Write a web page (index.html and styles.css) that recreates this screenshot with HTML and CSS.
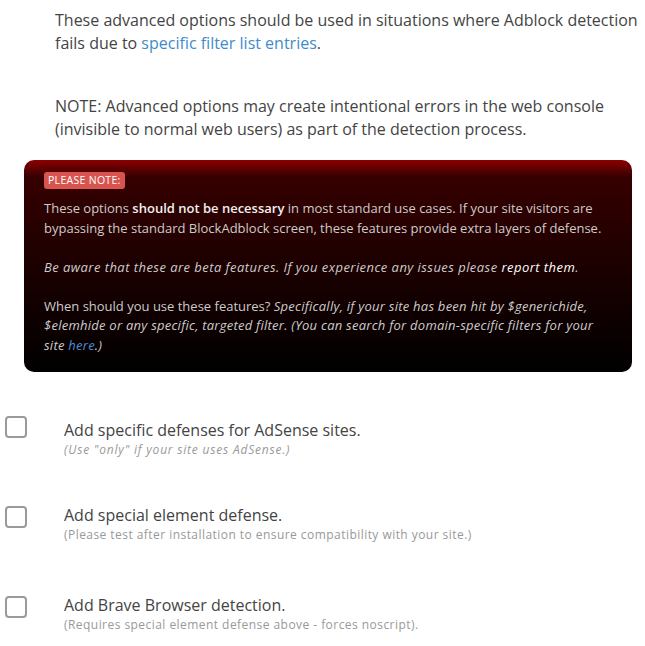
FILE: index.html
```html
<!DOCTYPE html>
<html>
<head>
<meta charset="utf-8">
<link rel="stylesheet" href="styles.css">
</head>
<body>
<div class="page">
  <div class="intro">
    <p class="lead">These advanced options should be used in situations where Adblock detection fails due to <a class="link" href="#">specific filter list entries</a>.</p>
    <p class="lead note">NOTE: Advanced options may create intentional errors in the web console (invisible to normal web users) as part of the detection process.</p>
  </div>
  <div class="warn">
    <span class="badge">PLEASE NOTE:</span>
    <p class="wtext first">These options <b>should not be necessary</b> in most standard use cases. If your site visitors are bypassing the standard BlockAdblock screen, these features provide extra layers of defense.</p>
    <p class="wtext"><i>Be aware that these are beta features. If you experience any issues please <a class="wlink-w" href="#">report them</a>.</i></p>
    <p class="wtext when">When should you use these features? <i>Specifically, if your site has been hit by $generichide, $elemhide or any specific, targeted filter. (You can search for domain-specific filters for your site <a class="wlink" href="#">here</a>.)</i></p>
  </div>
  <div class="options">
    <div class="opt">
      <span class="box"></span>
      <div class="otext top">
        <div class="olabel">Add specific defenses for AdSense sites.</div>
        <div class="osub"><i>(Use "only" if your site uses AdSense.)</i></div>
      </div>
    </div>
    <div class="opt">
      <span class="box"></span>
      <div class="otext">
        <div class="olabel">Add special element defense.</div>
        <div class="osub">(Please test after installation to ensure compatibility with your site.)</div>
      </div>
    </div>
    <div class="opt last">
      <span class="box"></span>
      <div class="otext">
        <div class="olabel">Add Brave Browser detection.</div>
        <div class="osub">(Requires special element defense above - forces noscript).</div>
      </div>
    </div>
  </div>
</div>
</body>
</html>
```
FILE: styles.css
```css
html, body { margin: 0; padding: 0; background: #fff; }
body { font-family: "Open Sans", "Lato", sans-serif; color: #444; }
.page { width: 645px; }
.intro { padding: 9px 0 0 55px; }
.lead { margin: 0; font-size: 16px; line-height: 23px; color: #444; }
.lead.note { margin-top: 40px; }
.link { color: #428bca; text-decoration: none; }
.warn {
  margin: 19px 13px 0 24px;
  padding: 7px 28px 19px 20px;
  border-radius: 10px;
  background: linear-gradient(to bottom, #8b0000 0, #360000 8%, #1c0000 50%, #000 100%);
  height: 186px;
}
.badge {
  display: inline-block;
  background: #d9534f;
  color: #fff;
  font-size: 10.5px;
  line-height: 17px;
  letter-spacing: 0.3px;
  padding: 0 4px;
  border-radius: 3px;
}
.wtext { margin: 19.5px 0 0; font-size: 13px; line-height: 19.5px; color: #cccccc; }
.wtext.first { margin-top: 10px; }
.wtext i { letter-spacing: 0.45px; }
.wtext.when i { letter-spacing: 0.25px; }
.wtext b { color: #f0f0f0; font-weight: 600; }
.wlink-w { color: #fff; text-decoration: none; }
.wlink { color: #4a8fd4; text-decoration: none; }
.options { margin-top: 44px; padding-left: 5px; display: flex; flex-direction: column; }
.opt { display: flex; align-items: flex-start; gap: 37px; height: 90px; }
.opt.last { height: auto; }
.box {
  flex: none;
  width: 22px; height: 22px;
  box-sizing: border-box;
  border: 2px solid #9a9a9a;
  border-radius: 4px;
}
.otext { margin-top: -1px; }
.otext.top { margin-top: 4px; }
.olabel { font-size: 16px; line-height: 20px; color: #444; }
.osub { font-size: 12px; line-height: 20px; color: #999; letter-spacing: 0.45px; }
.osub i { letter-spacing: 0.8px; }
```
